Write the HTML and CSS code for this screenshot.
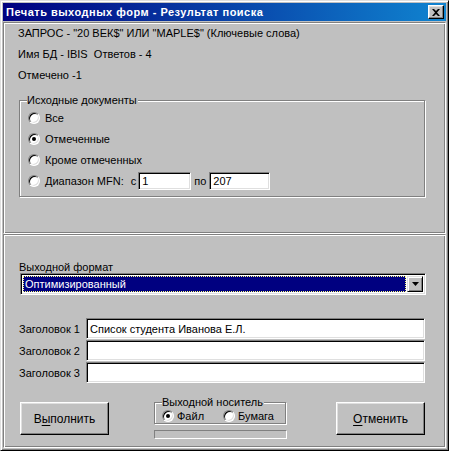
FILE: index.html
```html
<!DOCTYPE html>
<html>
<head>
<meta charset="utf-8">
<link rel="stylesheet" href="styles.css">
</head>
<body>
<div class="window">
  <div class="titlebar">
    <span class="title">Печать выходных форм - Результат поиска</span>
    <span class="close-btn">
      <svg width="8" height="7" viewBox="0 0 8 7"><path d="M0 0h2l2 2 2-2h2L5 3.5 8 7H6L4 5 2 7H0l3-3.5z" fill="#000"/></svg>
    </span>
  </div>
  <div class="panel panel-top">
    <div class="info">
      <div class="line">ЗАПРОС - "20 ВЕК$" ИЛИ "MAPLE$" (Ключевые слова)</div>
      <div class="line">Имя БД - IBIS&nbsp; Ответов - 4</div>
      <div class="line">Отмечено -1</div>
    </div>
    <div class="group group-docs">
      <span class="group-label">Исходные документы</span>
      <div class="radio-row"><span class="radio"></span><span>Все</span></div>
      <div class="radio-row"><span class="radio checked"></span><span>Отмеченные</span></div>
      <div class="radio-row"><span class="radio"></span><span>Кроме отмеченных</span></div>
      <div class="radio-row"><span class="radio"></span><span class="range-label">Диапазон MFN:</span><span class="range-c">с</span><span class="field field-from">1</span><span class="range-po">по</span><span class="field field-to">207</span></div>
    </div>
  </div>
  <div class="panel panel-bottom">
    <div class="format-label">Выходной формат</div>
    <div class="combo">
      <div class="combo-value"><span class="combo-text">Оптимизированный</span></div>
      <span class="combo-btn"><svg width="7" height="4" viewBox="0 0 7 4"><path d="M0 0h7L3.5 4z" fill="#000"/></svg></span>
    </div>
    <div class="headers">
      <div class="header-row"><span class="header-label">Заголовок 1</span><span class="field header-field">Список студента Иванова Е.Л.</span></div>
      <div class="header-row"><span class="header-label">Заголовок 2</span><span class="field header-field"></span></div>
      <div class="header-row"><span class="header-label">Заголовок 3</span><span class="field header-field"></span></div>
    </div>
    <div class="actions">
      <div class="btn">В<u>ы</u>полнить</div>
      <div class="media">
        <div class="group group-media">
          <span class="group-label">Выходной носитель</span>
          <div class="media-row">
            <span class="radio checked"></span><span class="media-file">Файл</span>
            <span class="radio"></span><span>Бумага</span>
          </div>
        </div>
        <div class="progress"></div>
      </div>
      <div class="btn btn-cancel"><u>О</u>тменить</div>
    </div>
  </div>
</div>
</body>
</html>
```
FILE: styles.css
```css
* { box-sizing: border-box; }
html, body { margin: 0; padding: 0; background: #c0c0c0; }
body {
  font-family: "Liberation Sans", Arial, sans-serif;
  font-size: 11px;
  color: #000;
}
.window {
  width: 449px;
  height: 451px;
  background: #c0c0c0;
  border: 1px solid;
  border-color: #dfdfdf #000 #000 #dfdfdf;
  box-shadow: inset 1px 1px 0 #fff, inset -1px -1px 0 #808080;
  padding: 2px;
  display: flex;
  flex-direction: column;
}
.titlebar {
  height: 18px;
  background: linear-gradient(to right, #000080, #1084d0);
  display: flex;
  align-items: center;
  justify-content: space-between;
  padding: 0 2px 0 3px;
  flex: none;
}
.title {
  color: #fff;
  font-weight: bold;
  font-size: 11px;
  letter-spacing: 0.5px;
}
.close-btn {
  width: 16px;
  height: 14px;
  background: #c0c0c0;
  border: 1px solid;
  border-color: #fff #000 #000 #fff;
  box-shadow: inset -1px -1px 0 #808080, inset 1px 1px 0 #dfdfdf;
  display: flex;
  align-items: center;
  justify-content: center;
}
.close-btn svg { display: block; margin-left: -1px; }
.panel {
  border: 1px solid;
  border-color: #808080 #fff #fff #808080;
  box-shadow: inset 1px 1px 0 #fff, inset -1px -1px 0 #808080;
  padding: 2px;
  flex: none;
  display: flex;
  flex-direction: column;
  align-items: flex-start;
}
.panel-top { height: 212px; margin-top: 1px; }
.panel-bottom { height: 214px; }
.info { padding: 2px 0 0 12px; }
.line { line-height: 13px; height: 13px; margin-bottom: 8px; white-space: nowrap; }
.group {
  position: relative;
  border: 1px solid #808080;
  box-shadow: 1px 1px 0 #fff, inset 1px 1px 0 #fff;
  flex: none;
}
.group-label {
  position: absolute;
  top: -7px;
  left: 7px;
  background: #c0c0c0;
  padding: 0 1px 0 0;
  line-height: 13px;
}
.group-docs {
  margin: 10px 0 0 13px;
  width: 406px;
  height: 97px;
  padding: 8px 0 0 8px;
  display: flex;
  flex-direction: column;
  gap: 4px;
}
.radio-row {
  display: flex;
  align-items: center;
  height: 17px;
  white-space: nowrap;
}
.radio {
  width: 12px;
  height: 12px;
  border-radius: 50%;
  background: #fff;
  border: 1px solid;
  border-color: #808080 #fff #fff #808080;
  box-shadow: inset 1px 1px 0 #000, inset -1px -1px 0 #dfdfdf;
  margin-right: 5px;
  flex: none;
  position: relative;
}
.radio.checked::after {
  content: "";
  position: absolute;
  left: 3px;
  top: 3px;
  width: 4px;
  height: 4px;
  border-radius: 50%;
  background: #000;
}
.field {
  display: flex;
  align-items: center;
  background: #fff;
  border: 1px solid;
  border-color: #808080 #fff #fff #808080;
  box-shadow: inset 1px 1px 0 #000, inset -1px -1px 0 #dfdfdf;
  padding-left: 3px;
  white-space: nowrap;
}
.range-c { margin-left: 7px; }
.field-from { margin-left: 2px; width: 53px; height: 18px; }
.range-po { margin-left: 3px; margin-right: 3px; }
.field-to { width: 61px; height: 18px; }
.format-label {
  margin: 25px 0 0 13px;
  line-height: 11px;
  height: 11px;
}
.combo {
  margin: 0 0 0 14px;
  width: 406px;
  height: 22px;
  background: #fff;
  border: 1px solid;
  border-color: #808080 #fff #fff #808080;
  box-shadow: inset 1px 1px 0 #000, inset -1px -1px 0 #dfdfdf;
  padding: 2px;
  display: flex;
}
.combo-value {
  flex: 1;
  background: #000080;
  border: 1px dotted #ffff80;
  color: #fff;
  display: flex;
  align-items: center;
  padding-left: 1px;
}
.combo-btn {
  width: 16px;
  height: 16px;
  flex: none;
  background: #c0c0c0;
  border: 1px solid;
  border-color: #dfdfdf #000 #000 #dfdfdf;
  box-shadow: inset 1px 1px 0 #fff, inset -1px -1px 0 #808080;
  display: flex;
  align-items: center;
  justify-content: center;
  margin-left: 1px;
}
.headers {
  margin: 23px 0 0 13px;
  display: flex;
  flex-direction: column;
  gap: 1px;
}
.header-row { display: flex; align-items: center; height: 21px; }
.header-label { width: 67px; white-space: nowrap; }
.header-field { width: 339px; height: 21px; }
.actions {
  margin: 19px 0 0 14px;
  display: flex;
  align-items: flex-start;
}
.btn {
  width: 89px;
  height: 33px;
  border: 1px solid;
  border-color: #fff #000 #000 #fff;
  box-shadow: inset -1px -1px 0 #808080, inset 1px 1px 0 #dfdfdf;
  display: flex;
  align-items: center;
  justify-content: center;
  font-size: 12px;
}
.btn u { text-underline-offset: 2px; }
.media { margin-left: 45px; width: 133px; }
.group-media { height: 22px; width: 132px; }
.media-row {
  display: flex;
  align-items: center;
  padding: 5px 0 0 7px;
  height: 20px;
}
.media-row .radio { margin-right: 3px; }
.media-file { margin-right: 19px; }
.progress {
  margin-top: 6px;
  width: 133px;
  height: 9px;
  border: 1px solid;
  border-color: #808080 #fff #fff #808080;
}
.btn-cancel { margin-left: 49px; }
```
